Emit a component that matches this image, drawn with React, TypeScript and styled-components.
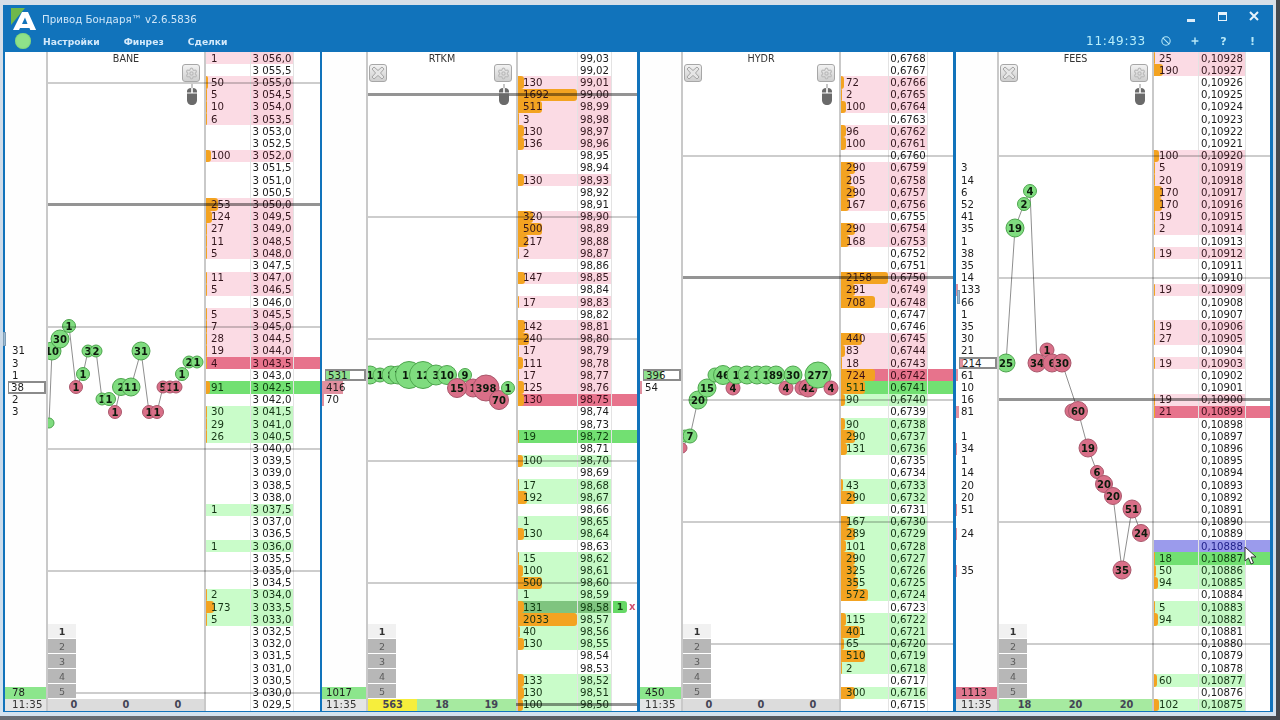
import React from "react";
import styled, { createGlobalStyle } from "styled-components";
import { Ban, Plus, Settings } from "lucide-react";

const ROW = 659 / 54;
const FONT = `"DejaVu Sans", "Liberation Sans", sans-serif`;

const Global = createGlobalStyle`
  html, body { margin: 0; padding: 0; background: #585d63; width: 1280px; height: 720px; overflow: hidden; }
  #root { width: 1280px; height: 720px; }
`;

const Desktop = styled.div`
  width: 1280px;
  height: 720px;
  background: linear-gradient(90deg, #6a6f75, #45494e);
  font-family: ${FONT};
`;
const Frame = styled.div`
  width: 1276px;
  height: 716px;
  box-sizing: border-box;
  padding: 5px 3px 4px 3px;
  background: linear-gradient(180deg, #d7dfe8, #c7d9ea 60%, #d4e3ef);
`;
const Window = styled.div`
  height: 707px;
  box-sizing: border-box;
  padding: 0 3px 0 2px;
  background: #1173bb;
  display: flex;
  flex-direction: column;
`;
const TitleBar = styled.div`
  height: 25px;
  display: flex;
  align-items: center;
  color: #cfe6f8;
  font-size: 10.25px;
`;
const Logo = styled.svg`
  width: 28px;
  height: 25px;
  margin-left: 5px;
  flex: none;
`;
const AppTitle = styled.div`
  margin-left: 4px;
  flex: 1;
  position: relative;
  top: 1px;
`;
const WinButton = styled.div`
  width: 31.6px;
  display: flex;
  justify-content: center;
  align-items: center;
`;
const MinGlyph = styled.div`
  width: 8px;
  height: 3px;
  margin-top: 6px;
  background: #dcecf8;
`;
const MaxGlyph = styled.div`
  width: 7px;
  height: 5px;
  border: 1px solid #e6f2fb;
  border-top-width: 3px;
  margin-top: -3px;
`;
const CloseGlyph = styled.svg`
  width: 10px;
  height: 10px;
  margin-top: -3px;
`;
const MenuBar = styled.div`
  height: 22px;
  display: flex;
  align-items: center;
  padding-left: 10px;
  padding-right: 3px;
`;
const StatusDot = styled.div`
  width: 16px;
  height: 16px;
  border-radius: 50%;
  background: #8fe28a;
  box-shadow: inset 0 0 2px #6ec56a;
  margin-right: 12px;
`;
const MenuItem = styled.div`
  font-size: 9.2px;
  font-weight: 700;
  color: #d4eafb;
  margin-right: 24px;
`;
const MenuSpacer = styled.div`
  flex: 1;
`;
const Clock = styled.div`
  color: #b8eefb;
  font-size: 12px;
  letter-spacing: 0.75px;
  margin-right: 5px;
`;
const ToolCell = styled.div`
  width: 29px;
  display: flex;
  justify-content: center;
  align-items: center;
  color: #b6e8f8;
  font-size: 11px;
  font-weight: 700;
`;
const Panels = styled.div`
  position: relative;
  display: flex;
  height: 659px;
`;
const Panel = styled.div<{ $cols: string; $gapRight: number }>`
  position: relative;
  display: grid;
  grid-template-columns: ${(p) => p.$cols};
  height: 659px;
  margin-right: ${(p) => p.$gapRight}px;
  background: #fff;
  overflow: hidden;
  font-size: 10.2px;
  color: #1c1c1c;
`;
const LeftCol = styled.div`
  display: grid;
  height: 659px;
  grid-template-rows: repeat(54, ${ROW}px);
  background: #fefefe;
`;
const LeftCell = styled.div<{ $pad: number; $boxed?: boolean; $tint?: string; $gray?: boolean }>`
  position: relative;
  display: flex;
  align-items: center;
  min-height: 0;
  padding-left: ${(p) => p.$pad}px;
  box-sizing: border-box;
  white-space: nowrap;
  line-height: 1;
  background: ${(p) => p.$tint || (p.$gray ? "#e4e5e5" : "transparent")};
  ${(p) => (p.$gray ? "color:#333;letter-spacing:.3px;" : "")}
  ${(p) => (p.$boxed ? "border:2px solid #8b8b8b;border-left-width:1px;margin-left:3px;padding-left:2px;z-index:1;background:#fff;" : "")}
`;
const LeftBar = styled.div<{ $color: string }>`
  position: absolute;
  left: 0;
  top: 0;
  bottom: 0;
  background: ${(p) => p.$color};
`;
const LeftText = styled.span`
  position: relative;
  top: 0.5px;
`;
const ChartCol = styled.div`
  position: relative;
  height: 659px;
  border-left: 2px solid #c9c9c9;
  overflow: hidden;
  display: flex;
  flex-direction: column;
`;
const Ticker = styled.div`
  height: 12px;
  line-height: 13px;
  text-align: center;
  font-size: 9.6px;
  color: #333;
  z-index: 1;
`;
const ChartSvg = styled.svg`
  position: absolute;
  left: 0;
  top: 0;
  width: 100%;
  height: 100%;
`;
const Bubble = styled.circle<{ $red?: boolean }>`
  fill: ${(p) => (p.$red ? "#d96f88" : "#7fdc7f")};
  stroke: ${(p) => (p.$red ? "#a9576b" : "#4ea54e")};
  stroke-width: 1;
`;
const BubbleLabel = styled.text`
  font-family: ${FONT};
  font-size: 10px;
  font-weight: 700;
  fill: #0c1a0c;
  text-anchor: middle;
  dominant-baseline: central;
`;
const ToolButton = styled.div<{ $side: "left" | "right" }>`
  position: absolute;
  top: 12px;
  ${(p) => p.$side}: ${(p) => (p.$side === "left" ? 1 : 4)}px;
  width: 18px;
  height: 18px;
  box-sizing: border-box;
  border: 1px solid #a7a7a7;
  border-radius: 3px;
  background: linear-gradient(180deg, #f2f2f2, #cfcfcf);
  display: flex;
  align-items: center;
  justify-content: center;
  z-index: 2;
`;
const MouseIcon = styled.svg`
  position: absolute;
  top: 32px;
  right: 6px;
  width: 12px;
  height: 22px;
  z-index: 2;
`;
const LevelStack = styled.div`
  position: absolute;
  left: 0;
  bottom: 13px;
  width: 28px;
  display: flex;
  flex-direction: column;
  gap: 1px;
  z-index: 2;
`;
const LevelButton = styled.div<{ $active?: boolean }>`
  height: 14px;
  line-height: 15px;
  text-align: center;
  font-size: 9.5px;
  font-weight: ${(p) => (p.$active ? 700 : 400)};
  color: ${(p) => (p.$active ? "#333" : "#5c5c5c")};
  background: ${(p) => (p.$active ? "#f1f1f1" : "#b7b7b7")};
`;
const ChartFoot = styled.div`
  position: absolute;
  left: 0;
  right: 0;
  bottom: 0;
  height: 12px;
  display: grid;
  grid-template-columns: repeat(3, 1fr);
  z-index: 2;
`;
const FootCell = styled.div<{ $bg: string }>`
  background: ${(p) => p.$bg};
  text-align: center;
  line-height: 12px;
  font-size: 9.8px;
  font-weight: 700;
  color: #445;
`;
const Book = styled.div`
  border-left: 2px solid #c9c9c9;
  display: grid;
  height: 659px;
  grid-template-rows: repeat(54, ${ROW}px);
  min-width: 0;
`;
const BookRow = styled.div<{ $bg: string }>`
  display: flex;
  align-items: stretch;
  min-height: 0;
  line-height: 1;
  background: ${(p) => p.$bg};
`;
const VolCell = styled.div<{ $w: number; $bg: string; $color: string }>`
  position: relative;
  flex: none;
  width: ${(p) => p.$w}px;
  background: ${(p) => p.$bg};
  color: ${(p) => p.$color};
  padding-left: 5px;
  box-sizing: border-box;
  display: flex;
  align-items: center;
`;
const VolBar = styled.div`
  position: absolute;
  left: 0;
  top: 0;
  bottom: 0;
  background: #f3a321;
  border-radius: 0 3px 3px 0;
`;
const VolText = styled.span`
  position: relative;
  top: 0.5px;
`;
const PriceCell = styled.div<{ $w: number; $bg: string; $color: string }>`
  flex: none;
  width: ${(p) => p.$w}px;
  box-sizing: border-box;
  background: ${(p) => p.$bg};
  color: ${(p) => p.$color};
  border-left: 1px solid #e3e3e3;
  border-right: 1px solid #e3e3e3;
  padding-top: 1px;
  display: flex;
  align-items: center;
  justify-content: center;
  white-space: nowrap;
`;
const RestCell = styled.div`
  flex: 1;
  display: flex;
  align-items: center;
  min-width: 0;
`;
const OrderChip = styled.div`
  width: 14px;
  height: 100%;
  background: #66d966;
  border-radius: 0 3px 3px 0;
  margin-left: 1px;
  text-align: center;
  line-height: 12px;
  font-weight: 700;
  font-size: 9.5px;
  color: #124512;
`;
const OrderCancel = styled.div`
  color: #d05070;
  font-weight: 700;
  margin-left: 2px;
  font-size: 10px;
`;
const LevelLine = styled.div<{ $left: number; $heavy?: boolean }>`
  position: absolute;
  left: ${(p) => p.$left}px;
  right: 0;
  height: ${(p) => (p.$heavy ? 3 : 2)}px;
  margin-top: ${(p) => (p.$heavy ? -1.5 : -1)}px;
  background: ${(p) => (p.$heavy ? "#949494" : "#cdcdcd")};
  mix-blend-mode: multiply;
  z-index: 1;
`;
const EdgeTab = styled.div<{ $x: number; $y: number }>`
  position: absolute;
  left: ${(p) => p.$x}px;
  top: ${(p) => p.$y}px;
  width: 3px;
  height: 14px;
  background: #9dbdd6;
  border: 1px solid #7f9db5;
  box-sizing: border-box;
  z-index: 3;
`;
const Cursor = styled.svg`
  position: absolute;
  left: 1239px;
  top: 494px;
  width: 14px;
  height: 20px;
  z-index: 4;
`;

type LeftItem = { v: string; bar?: string; w?: number; boxed?: boolean };
type B = [number, number, number, string, boolean?];
type PanelCfg = {
  name: string;
  cols: [number, number, number];
  gap: number;
  pad: number;
  volW: number;
  priceW: number;
  price: (i: number) => string;
  vols: Record<number, number>;
  red: number;
  green: number;
  blue?: number;
  strong?: number;
  levels: number[];
  heavy: number[];
  left: Record<number, LeftItem>;
  total: string;
  totalRed?: boolean;
  foot: [string, string, string];
  footBg: [string, string, string];
  closable: boolean;
  path: [number, number][];
  bubbles: B[];
};

const GREEN = "#8fe08f";
const RED = "#e0909f";

const panels: PanelCfg[] = [
  {
    name: "BANE",
    cols: [41, 158, 116],
    gap: 2,
    pad: 7,
    volW: 44,
    priceW: 44,
    price: (i) => {
      const v = 30560 - i * 5;
      const whole = Math.floor(v / 10);
      return `3 ${String(whole - 3000).padStart(3, "0")},${v % 10}`;
    },
    vols: { 0: 1, 2: 50, 3: 5, 4: 10, 5: 6, 8: 100, 12: 253, 13: 124, 14: 27, 15: 11, 16: 5, 18: 11, 19: 5, 21: 5, 22: 7, 23: 28, 24: 19, 25: 4, 27: 91, 29: 30, 30: 29, 31: 26, 37: 1, 40: 1, 44: 2, 45: 173, 46: 5 },
    red: 25,
    green: 27,
    levels: [2, 22, 32, 42, 52],
    heavy: [12],
    left: { 24: { v: "31" }, 25: { v: "3" }, 26: { v: "1" }, 27: { v: "38", boxed: true }, 28: { v: "2" }, 29: { v: "3" } },
    total: "78",
    foot: ["0", "0", "0"],
    footBg: ["#dcdcdc", "#dcdcdc", "#dcdcdc"],
    closable: false,
    path: [[49, 423], [52, 351], [60, 339], [69, 326], [76, 387], [83, 374], [88, 351], [96, 351], [102, 399], [109, 399], [115, 412], [121, 387], [131, 387], [141, 351], [149, 412], [157, 412], [163, 387], [176, 387], [182, 374], [189, 362], [197, 362]],
    bubbles: [[49, 423, 5, ""], [52, 351, 9, "10"], [60, 339, 9, "30"], [69, 326, 6.5, "1"], [76, 387, 6.5, "1", true], [83, 374, 6.5, "1"], [88, 351, 6, "3"], [96, 351, 6, "2"], [102, 399, 6, "1"], [109, 399, 6.5, "1"], [115, 412, 6.5, "1", true], [121, 387, 8.5, "2"], [131, 387, 9, "11"], [141, 351, 9, "31"], [149, 412, 6.5, "1", true], [157, 412, 6.5, "1", true], [163, 387, 6, "5", true], [170, 387, 6, "1", true], [176, 387, 6, "1", true], [182, 374, 6.5, "1"], [189, 362, 6, "2"], [197, 362, 6, "1"]],
  },
  {
    name: "RTKM",
    cols: [44, 150, 121],
    gap: 3,
    pad: 4,
    volW: 59,
    priceW: 35,
    price: (i) => ((9903 - i) / 100).toFixed(2).replace(".", ","),
    vols: { 2: 130, 3: 1692, 4: 511, 5: 3, 6: 130, 7: 136, 10: 130, 13: 320, 14: 500, 15: 217, 16: 2, 18: 147, 20: 17, 22: 142, 23: 240, 24: 17, 25: 111, 26: 17, 27: 125, 28: 130, 31: 19, 33: 100, 35: 17, 36: 192, 38: 1, 39: 130, 41: 15, 42: 100, 43: 500, 44: 1, 45: 131, 46: 2033, 47: 40, 48: 130, 51: 133, 52: 130, 53: 100 },
    red: 28,
    green: 31,
    strong: 45,
    levels: [13, 23, 33, 43],
    heavy: [3, 53],
    left: { 26: { v: "531", boxed: true, bar: GREEN, w: 24 }, 27: { v: "416", bar: RED, w: 21 }, 28: { v: "70", bar: RED, w: 2 } },
    total: "1017",
    foot: ["563", "18", "19"],
    footBg: ["#f6ee3c", "#a6eaa0", "#a6eaa0"],
    closable: true,
    path: [],
    bubbles: [[370, 375, 9, "1"], [380, 375, 7, "1"], [391, 375, 9, "8"], [398, 375, 9, "7"], [409, 375, 13.5, "19"], [423, 375, 13.5, "12"], [436, 375, 10, "3"], [447, 375, 9.5, "10"], [465, 375, 6.5, "9"], [473, 388, 9, "1", true], [457, 388, 9.5, "15", true], [486, 388, 13, "398", true], [499, 400, 9.5, "70", true], [508, 388, 6.5, "1"]],
  },
  {
    name: "HYDR",
    cols: [41, 158, 114],
    gap: 3,
    pad: 5,
    volW: 47,
    priceW: 40,
    price: (i) => `0,${6768 - i}`,
    vols: { 2: 72, 3: 2, 4: 100, 6: 96, 7: 100, 9: 290, 10: 205, 11: 290, 12: 167, 14: 290, 15: 168, 18: 2158, 19: 291, 20: 708, 23: 440, 24: 83, 25: 18, 26: 724, 27: 511, 28: 90, 30: 90, 31: 290, 32: 131, 35: 43, 36: 290, 38: 167, 39: 289, 40: 101, 41: 290, 42: 325, 43: 355, 44: 572, 46: 115, 47: 401, 48: 65, 49: 510, 50: 2, 52: 300 },
    red: 26,
    green: 27,
    levels: [8, 28, 38, 48],
    heavy: [18],
    left: { 26: { v: "396", boxed: true, bar: GREEN, w: 18 }, 27: { v: "54", bar: RED, w: 2 } },
    total: "450",
    foot: ["0", "0", "0"],
    footBg: ["#dcdcdc", "#dcdcdc", "#dcdcdc"],
    closable: true,
    path: [[682, 448], [690, 436], [698, 400], [707, 388], [723, 375]],
    bubbles: [[682, 448, 5, "", true], [685, 436, 6, "4"], [690, 436, 7, "7"], [698, 400, 9, "20"], [707, 388, 9, "15"], [715, 375, 7, ""], [733, 388, 7, "4", true], [723, 375, 9.5, "46"], [736, 375, 9, "1"], [747, 375, 9, "2"], [757, 375, 9, "1"], [766, 375, 9, "1"], [786, 388, 7, "4", true], [776, 375, 9, "89"], [793, 375, 9, "30"], [802, 388, 7, "", true], [808, 388, 9, "42", true], [818, 375, 13, "277"], [831, 388, 7, "4", true]],
  },
  {
    name: "FEES",
    cols: [41, 155, 118],
    gap: 0,
    pad: 5,
    volW: 44,
    priceW: 48,
    price: (i) => `0,${10928 - i}`,
    vols: { 0: 25, 1: 190, 8: 100, 9: 5, 10: 20, 11: 170, 12: 170, 13: 19, 14: 2, 16: 19, 19: 19, 22: 19, 23: 27, 25: 19, 28: 19, 29: 21, 41: 18, 42: 50, 43: 94, 45: 5, 46: 94, 51: 60, 53: 102 },
    red: 29,
    green: 41,
    blue: 40,
    levels: [8, 18, 38, 48],
    heavy: [28],
    left: {
      9: { v: "3" }, 10: { v: "14" }, 11: { v: "6" }, 12: { v: "52" }, 13: { v: "41" }, 14: { v: "35" }, 15: { v: "1" }, 16: { v: "38" }, 17: { v: "35" }, 18: { v: "14" },
      19: { v: "133", bar: RED, w: 2 }, 20: { v: "66" }, 21: { v: "1" }, 22: { v: "35" }, 23: { v: "30" }, 24: { v: "21" }, 25: { v: "214", boxed: true, bar: RED, w: 3 },
      26: { v: "61", bar: RED, w: 2 }, 27: { v: "10" }, 28: { v: "16" }, 29: { v: "81", bar: RED, w: 3 }, 31: { v: "1" }, 32: { v: "34", bar: RED, w: 1 }, 33: { v: "1" },
      34: { v: "14" }, 35: { v: "20" }, 36: { v: "20" }, 37: { v: "51", bar: RED, w: 1 }, 39: { v: "24", bar: RED, w: 1 }, 42: { v: "35", bar: RED, w: 1 },
    },
    total: "1113",
    totalRed: true,
    foot: ["18", "20", "20"],
    footBg: ["#a6eaa0", "#a6eaa0", "#a6eaa0"],
    closable: true,
    path: [[1006, 363], [1015, 228], [1024, 204], [1030, 191], [1037, 363], [1047, 350], [1052, 363], [1062, 363], [1078, 411], [1088, 448], [1097, 472], [1104, 484], [1113, 496], [1122, 570], [1132, 509], [1141, 533]],
    bubbles: [[1006, 363, 9, "25"], [1015, 228, 9, "19"], [1024, 204, 6.5, "2"], [1030, 191, 6.5, "4"], [1047, 350, 7, "1", true], [1037, 363, 9, "34", true], [1052, 363, 9, "6", true], [1062, 363, 9, "30", true], [1072, 411, 7, "", true], [1078, 411, 9.5, "60", true], [1088, 448, 9, "19", true], [1097, 472, 6.5, "6", true], [1104, 484, 8.5, "20", true], [1113, 496, 8.5, "20", true], [1132, 509, 9, "51", true], [1141, 533, 8.5, "24", true], [1122, 570, 9, "35", true]],
  },
];

const PANEL_X = [5, 322, 640, 956];

const palette = (cfg: PanelCfg, i: number, has: boolean) => {
  if (cfg.blue === i) return { row: "#9b9bec", vol: "transparent", price: "#9b9bec", text: "#22228c" };
  if (i === cfg.red) return { row: "#e7738c", vol: "transparent", price: "#e7738c", text: "#3a0d18" };
  if (i === cfg.green) return { row: "#72e072", vol: "transparent", price: "#72e072", text: "#0d3a0d" };
  if (cfg.strong === i) return { row: "#fff", vol: "#7fc47f", price: "#7fc47f", text: "#0d3a0d" };
  if (!has) return { row: "#fff", vol: "#fff", price: "#fff", text: "#1c1c1c" };
  return i < cfg.red
    ? { row: "#fff", vol: "#fbdbe4", price: "#f9d4de", text: "#33161d" }
    : { row: "#fff", vol: "#c9fcc9", price: "#c4f8c4", text: "#143314" };
};

const GearButton = () => (
  <ToolButton $side="right">
    <Settings size={13} color="#bcbcbc" strokeWidth={2.4} />
  </ToolButton>
);

const CloseButton = () => (
  <ToolButton $side="left">
    <svg width="14" height="14" viewBox="0 0 14 14">
      <path d="M3 1 7 4.5 11 1 13 3 9.5 7 13 11 11 13 7 9.5 3 13 1 11 4.5 7 1 3Z" fill="#e6e6e6" stroke="#a5a5a5" strokeWidth="1" />
    </svg>
  </ToolButton>
);

const Mouse = () => (
  <MouseIcon viewBox="0 0 12 22">
    <path d="M6 0V4" stroke="#8d8d8d" strokeWidth="1" />
    <path d="M1 7.5C1 5.5 2.5 4 5.2 4V8.5H1Z" fill="#6a6a6a" />
    <path d="M11 7.5C11 5.5 9.5 4 6.8 4V8.5H11Z" fill="#6a6a6a" />
    <path d="M1 9.5H11V16C11 19 9 21 6 21S1 19 1 16Z" fill="#6a6a6a" />
  </MouseIcon>
);

const BookPanel = ({ cfg }: { cfg: PanelCfg }) => (
  <Book>
    {Array.from({ length: 54 }, (_, i) => {
      const vol = cfg.vols[i];
      const c = palette(cfg, i, vol !== undefined);
      return (
        <BookRow key={i} $bg={c.row}>
          <VolCell $w={cfg.volW} $bg={c.vol} $color={c.text}>
            {vol !== undefined && <VolBar style={{ width: Math.min(cfg.volW, vol / 21) }} />}
            {vol !== undefined && <VolText>{vol}</VolText>}
          </VolCell>
          <PriceCell $w={cfg.priceW} $bg={c.price} $color={c.text}>
            {cfg.price(i)}
          </PriceCell>
          <RestCell>
            {cfg.strong === i && <OrderChip>1</OrderChip>}
            {cfg.strong === i && <OrderCancel>x</OrderCancel>}
          </RestCell>
        </BookRow>
      );
    })}
  </Book>
);

const LeftColumn = ({ cfg }: { cfg: PanelCfg }) => (
  <LeftCol>
    {Array.from({ length: 52 }, (_, i) => {
      const item = cfg.left[i];
      return (
        <LeftCell key={i} $pad={cfg.pad} $boxed={item?.boxed}>
          {item?.bar && <LeftBar $color={item.bar} style={{ width: item.w }} />}
          {item && <LeftText>{item.v}</LeftText>}
        </LeftCell>
      );
    })}
    <LeftCell $pad={cfg.pad} $tint={cfg.totalRed ? "#e0778f" : "#8ce68c"}>
      <LeftText>{cfg.total}</LeftText>
    </LeftCell>
    <LeftCell $pad={cfg.pad} $gray>
      <LeftText>11:35</LeftText>
    </LeftCell>
  </LeftCol>
);

const Chart = ({ cfg, index }: { cfg: PanelCfg; index: number }) => {
  const x0 = PANEL_X[index] + cfg.cols[0] + 2;
  const w = cfg.cols[1] - 2;
  return (
    <ChartCol>
      <ChartSvg viewBox={`${x0} 52 ${w} 659`}>
        {cfg.path.length > 0 && (
          <polyline
            points={cfg.path.map((p) => p.join(",")).join(" ")}
            fill="none"
            stroke="#8f8f8f"
            strokeWidth="1"
          />
        )}
        {cfg.bubbles.map(([x, y, r, label, red], i) => (
          <g key={i}>
            <Bubble cx={x} cy={y} r={r} $red={red} />
            {label && (
              <BubbleLabel x={x} y={y}>
                {label}
              </BubbleLabel>
            )}
          </g>
        ))}
      </ChartSvg>
      <Ticker>{cfg.name}</Ticker>
      {cfg.closable && <CloseButton />}
      <GearButton />
      <Mouse />
      <LevelStack>
        {[1, 2, 3, 4, 5].map((n) => (
          <LevelButton key={n} $active={n === 1}>
            {n}
          </LevelButton>
        ))}
      </LevelStack>
      <ChartFoot>
        {cfg.foot.map((f, i) => (
          <FootCell key={i} $bg={cfg.footBg[i]}>
            {f}
          </FootCell>
        ))}
      </ChartFoot>
    </ChartCol>
  );
};

export default function App() {
  return (
    <Desktop>
      <Global />
      <Frame>
        <Window>
          <TitleBar>
            <Logo viewBox="0 0 28 25">
              <path d="M1 3H15L1 20Z" fill="#6fb84a" />
              <path d="M2 27 12 7H18L27 27H21L19.5 23H10L8 27Z" fill="#fff" />
              <path d="M12 19H17.5L15 12.5Z" fill="#1173bb" />
            </Logo>
            <AppTitle>Привод Бондаря™ v2.6.5836</AppTitle>
            <WinButton>
              <MinGlyph />
            </WinButton>
            <WinButton>
              <MaxGlyph />
            </WinButton>
            <WinButton>
              <CloseGlyph viewBox="0 0 10 10">
                <path d="M1 1 9 9M9 1 1 9" stroke="#e6f2fb" strokeWidth="2" />
              </CloseGlyph>
            </WinButton>
          </TitleBar>
          <MenuBar>
            <StatusDot />
            <MenuItem>Настройки</MenuItem>
            <MenuItem>Финрез</MenuItem>
            <MenuItem>Сделки</MenuItem>
            <MenuSpacer />
            <Clock>11:49:33</Clock>
            <ToolCell>
              <Ban size={10} strokeWidth={2.5} />
            </ToolCell>
            <ToolCell>
              <Plus size={10} strokeWidth={3.5} />
            </ToolCell>
            <ToolCell>?</ToolCell>
            <ToolCell>!</ToolCell>
          </MenuBar>
          <Panels>
            {panels.map((cfg, i) => (
              <Panel key={cfg.name} $cols={cfg.cols.map((c) => `${c}px`).join(" ")} $gapRight={cfg.gap}>
                <LeftColumn cfg={cfg} />
                <Chart cfg={cfg} index={i} />
                <BookPanel cfg={cfg} />
                {[...cfg.levels, ...cfg.heavy].map((r) => (
                  <LevelLine
                    key={r}
                    $left={cfg.cols[0] + 2}
                    $heavy={cfg.heavy.includes(r)}
                    style={{ top: (r + 0.5) * ROW }}
                  />
                ))}
              </Panel>
            ))}
            <EdgeTab $x={-2} $y={280} />
            <EdgeTab $x={952} $y={238} />
            <Cursor viewBox="0 0 14 20">
              <path d="M1 1V15L4.5 12 7 18 9.5 17 7 11H12Z" fill="#fff" stroke="#333" strokeWidth="1" />
            </Cursor>
          </Panels>
        </Window>
      </Frame>
    </Desktop>
  );
}
